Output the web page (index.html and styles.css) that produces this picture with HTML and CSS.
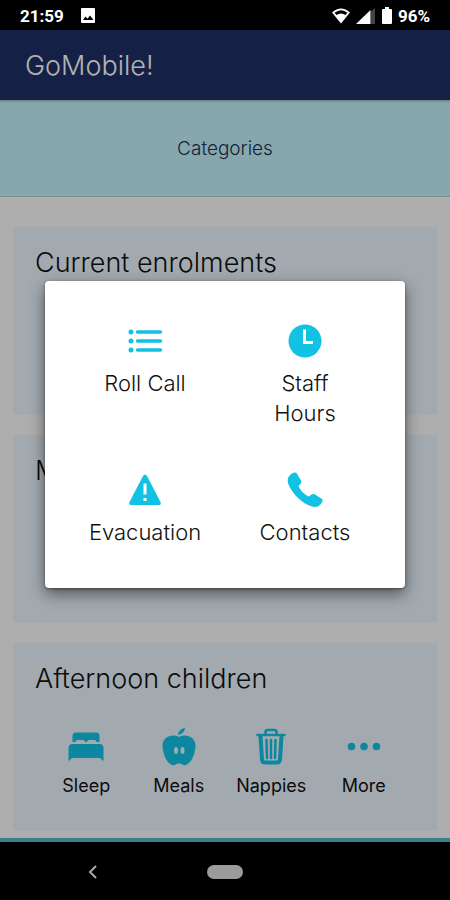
FILE: index.html
```
<!DOCTYPE html>
<html lang="en">
<head>
  <meta charset="utf-8">
  <meta name="viewport" content="width=device-width, initial-scale=1">
  <title>GoMobile!</title>
  <link rel="stylesheet" href="styles.css">
</head>
<body>
<div class="status-bar">
  <span>21:59</span>
  <svg class="picture-icon" width="16" height="16" viewBox="0 0 16 16">
    <rect x="1" y="0" width="14" height="15" rx="1" fill="#fff"/>
    <path d="M3 12l2.500-3.500 2 2.200 2.500-3.200 3.500 4.500z" fill="#000"/>
  </svg>
  <div class="status-right">
    <svg width="20" height="18" viewBox="0 0 20 18">
      <path d="M1 5.500Q10-2.500 19 5.500L10 16.500z" fill="#fff"/>
      <path d="M3.500 5.800Q10 .500 16.500 5.800L14.500 8Q10 5 5.500 8z" fill="#000"/>
    </svg>
    <svg width="20" height="18" viewBox="0 0 20 18">
      <path d="M15 4.500L19 1v16h-4z" fill="#444"/>
      <path d="M0 17L14.500 3v14z" fill="#fff"/>
    </svg>
    <svg width="12" height="18" viewBox="0 0 12 18">
      <path d="M4 0h4v2h2q1 0 1 1v13q0 1-1 1H2q-1 0-1-1V3q0-1 1-1h2z" fill="#fff"/>
    </svg>
    <span>96%</span>
  </div>
</div>

<div class="app">
  <header class="app-bar">
    <h1>GoMobile!</h1>
  </header>
  <div class="categories">Categories</div>

  <main class="cards">
    <section class="card">
      <h2>Current enrolments</h2>
    </section>
    <section class="card">
      <h2>Morning children</h2>
    </section>
    <section class="card">
      <h2>Afternoon children</h2>
      <div class="card-actions">
        <button class="action">
          <svg class="icon" viewBox="0 0 36 36">
            <path d="M4.500 13V7q0-3.500 3.500-3.500h20q3.500 0 3.500 3.500v6h-3q0-2-2.500-2h-5q-1.500 0-2 2h-2q-.5-2-2-2h-5Q7.500 11 7.500 13z"/>
            <path d="M4.500 15h27q4 0 4 4v12.500H34q-.3-2.500-2.500-2.500h-27Q2.300 29 2 31.500H.500V19q0-4 4-4z"/>
          </svg>
          <span>Sleep</span>
        </button>
        <button class="action">
          <svg class="icon" viewBox="0 0 36 36">
            <path d="M17 6q0-5 7-7.500 0 6-7 7.500z"/>
            <path fill-rule="evenodd" d="M18 8c3-2 7-2 10.500-.5 5 2 7 7 5.500 13.500-1 6-4 13-9 15-3 1-4.500-1.500-6.500-1.500h-1c-2 0-3.500 2.500-6.500 1.500-5-2-8-9-9-15C.500 14.500 2.500 9.500 7.500 7.500c3.500-1.500 7.500-1.500 10.500.5zM15 18c-1.400 0-2 1.500-2 3.500s.6 3.500 2 3.500 2-1.500 2-3.500-.6-3.500-2-3.500zM21.500 18c-1.400 0-2 1.500-2 3.500s.6 3.500 2 3.500 2-1.500 2-3.500-.6-3.500-2-3.500z"/>
          </svg>
          <span>Meals</span>
        </button>
        <button class="action">
          <svg class="icon" viewBox="0 0 36 36">
            <path class="line thin" d="M12.500 5V3q0-2 2-2h7q2 0 2 2v2M4.500 6h27"/>
            <path class="line" d="M7.500 7L9 30.500q.2 3 3 3h12q2.800 0 3-3L28.500 7"/>
            <path class="line thin" d="M13.500 11l.5 18M18 11v18M22.500 11l-.5 18"/>
          </svg>
          <span>Nappies</span>
        </button>
        <button class="action">
          <svg class="icon" viewBox="0 0 36 36">
            <circle cx="5.500" cy="17.500" r="3.800"/>
            <circle cx="18" cy="17.500" r="3.800"/>
            <circle cx="30.500" cy="17.500" r="3.800"/>
          </svg>
          <span>More</span>
        </button>
      </div>
    </section>
  </main>

  <div class="overlay">
    <div class="dialog" role="dialog" aria-label="Categories">
      <button class="action">
        <svg class="icon" viewBox="0 0 36 36">
          <circle cx="4" cy="9" r="2.500"/>
          <circle cx="4" cy="18" r="2.500"/>
          <circle cx="4" cy="27" r="2.500"/>
          <path class="line medium" d="M10.500 9h23M10.500 18h23M10.500 27h23"/>
        </svg>
        <span>Roll Call</span>
      </button>
      <button class="action">
        <svg class="icon" viewBox="0 0 36 36">
          <circle cx="18" cy="18" r="16.500"/>
          <path class="cut" d="M17.500 6.500v13H26"/>
        </svg>
        <span>Staff Hours</span>
      </button>
      <button class="action">
        <svg class="icon" viewBox="0 0 36 36">
          <path d="M16 4q2-3 4 0l13.500 26q1 3-1.500 3H4q-2.500 0-1.500-3z"/>
          <path class="cut" d="M18 11.500v11M18 26v3"/>
        </svg>
        <span>Evacuation</span>
      </button>
      <button class="action">
        <svg class="icon" viewBox="0 0 36 36">
          <path d="M3 3C5 1 8-.5 9.500 1l4.500 7.500c1 2-1 4-2.500 5.500 1.500 4 6 9 10.500 10.500 2-2 4-3 6-2l7 4.500c1.500 1.500 0 4-2 6-3 3-8 2-12 0C12 28.500 4.500 20 1.500 12.500 0 9 .5 5.500 3 3z"/>
        </svg>
        <span>Contacts</span>
      </button>
    </div>
  </div>
</div>

<nav class="nav-bar">
  <button class="back" aria-label="Back">
    <svg width="12" height="16" viewBox="0 0 12 16">
      <path d="M9 2L3 8l6 6" fill="none" stroke="#a8a8a8" stroke-width="2"/>
    </svg>
  </button>
  <button class="home" aria-label="Home"></button>
</nav>
</body>
</html>
```

FILE: styles.css
```
* {
  box-sizing: border-box;
}

body {
  margin: 0;
  min-height: 100vh;
  display: flex;
  flex-direction: column;
  background-color: #000;
  font-family: Inter, "Open Sans", sans-serif;
  font-weight: 300;
  color: #111;
}

button {
  padding: 0;
  border: none;
  background: none;
  font: inherit;
  color: inherit;
}

.status-bar {
  display: flex;
  align-items: center;
  height: 30px;
  padding: 2px 20px 0;
  color: #fff;
  font-family: Roboto, sans-serif;
  font-size: 17px;
  font-weight: 700;
}

.picture-icon {
  margin-left: 16px;
}

.status-right {
  display: flex;
  align-items: center;
  gap: 5px;
  margin-left: auto;
}

.app {
  position: relative;
  flex: 1;
  background-color: #fafafa;
  border-bottom: 4px solid #3d7f8d;
}

.app-bar {
  display: flex;
  align-items: center;
  height: 70px;
  padding: 0 25px;
  background-color: #1d2f65;
  color: #fff;
}

.app-bar h1 {
  margin: 0;
  font-size: 27px;
  font-weight: 300;
}

.categories {
  display: flex;
  align-items: center;
  justify-content: center;
  height: 97px;
  background-color: #c1f0f7;
  border-bottom: 1px solid #b4ccd0;
  font-size: 19px;
  color: #1d2f55;
  box-shadow: inset 0 4px 3px -3px rgba(0, 0, 0, 0.3);
}

.cards {
  display: flex;
  flex-direction: column;
  gap: 21px;
  padding: 30px 13px 8px;
}

.card {
  min-height: 187px;
  padding: 20px 22px 32px;
  border-radius: 2px;
  background-color: #e9f4fd;
  box-shadow: 0 0 1px rgba(0, 0, 0, 0.1);
}

.card h2 {
  margin: 0 0 34px;
  font-size: 27px;
  font-weight: 300;
  line-height: 32px;
}

.card-actions {
  display: grid;
  grid-template-columns: repeat(4, 1fr);
  margin: 0 5px;
}

.action {
  display: flex;
  flex-direction: column;
  align-items: center;
  gap: 9px;
  font-size: 18px;
  line-height: 24px;
}

.card .action {
  font-weight: 400;
}

.icon {
  width: 36px;
  height: 36px;
  fill: #12c2e4;
  overflow: visible;
}

.line {
  fill: none;
  stroke: #12c2e4;
  stroke-width: 4;
  stroke-linecap: round;
}

.medium {
  stroke-width: 3.5;
}

.thin {
  stroke-width: 2.5;
}

.cut {
  fill: none;
  stroke: #fff;
  stroke-width: 3;
}

.overlay {
  position: absolute;
  inset: 0;
  display: flex;
  align-items: center;
  justify-content: center;
  background-color: rgba(0, 0, 0, 0.3);
}

.dialog {
  display: grid;
  grid-template-columns: repeat(2, minmax(0, 1fr));
  gap: 44px 0;
  width: 80%;
  padding: 42px 20px 41px;
  border-radius: 4px;
  background-color: #fff;
  box-shadow: 0 6px 16px rgba(0, 0, 0, 0.5), 0 1px 3px rgba(0, 0, 0, 0.4);
}

.dialog .action {
  padding: 0 24px;
  font-size: 22px;
  line-height: 30px;
}

/* navigation buttons of the phone */
.nav-bar {
  display: grid;
  grid-template-columns: 1fr 36px 1fr;
  column-gap: 21px;
  align-items: center;
  height: 59px;
}

.back {
  display: flex;
  justify-self: center;
}

.home {
  height: 14px;
  border-radius: 7px;
  background-color: #9c9c9c;
}
```
